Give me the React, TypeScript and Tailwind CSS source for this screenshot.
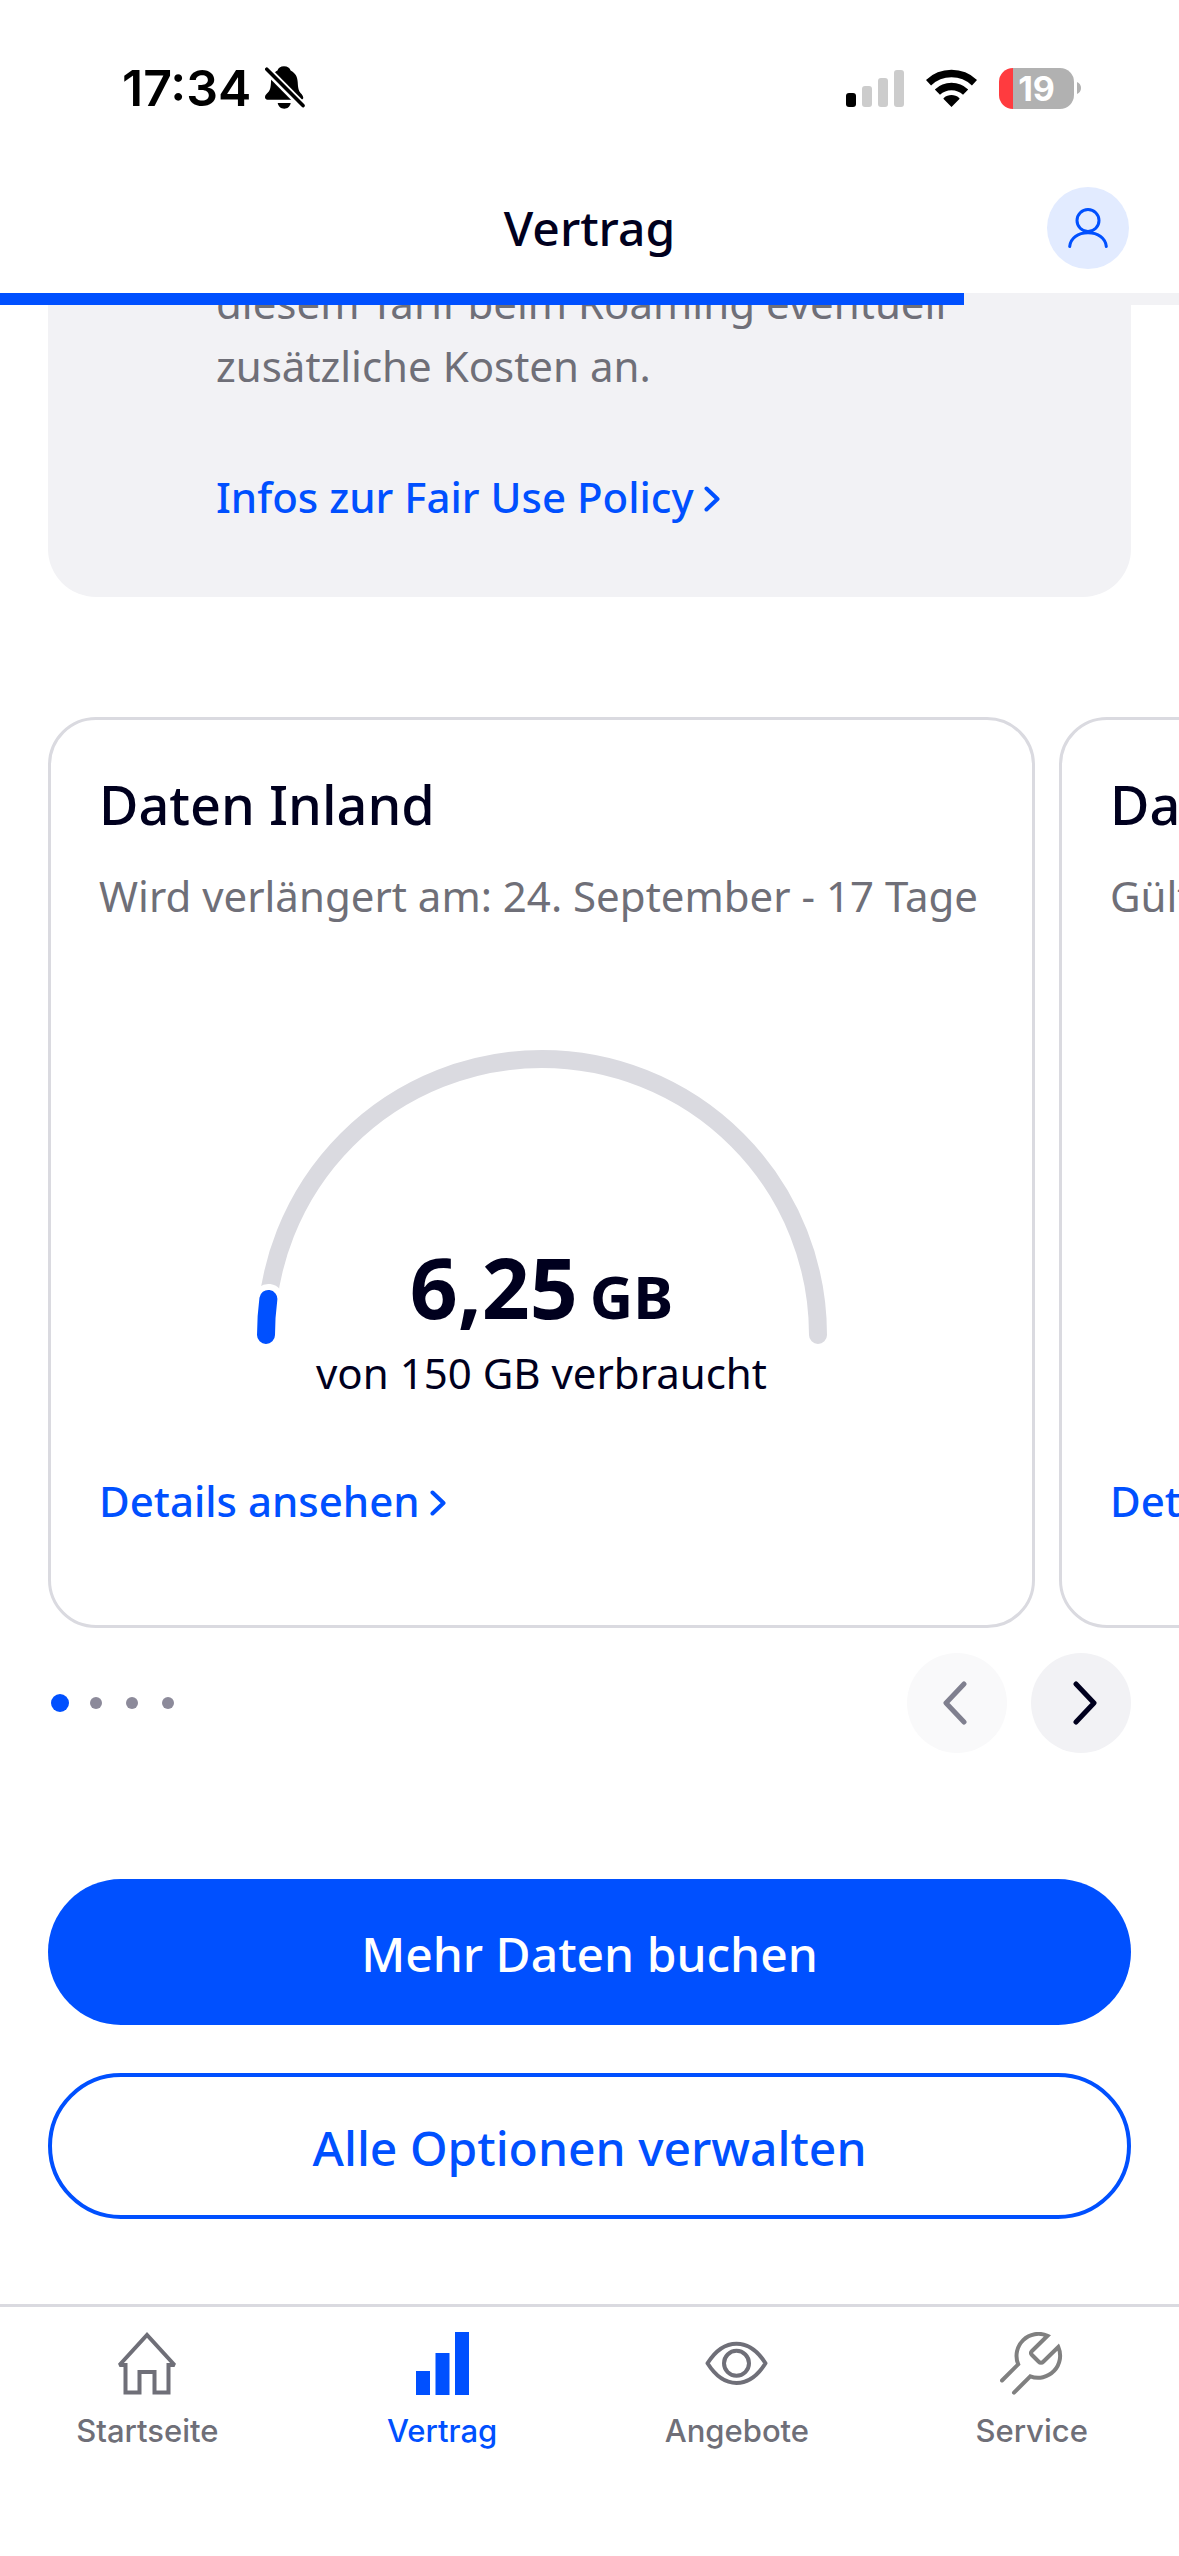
import React, { useState } from 'react';

interface Allowance {
  title: string;
  validity: string;
  used: number;
  total: number;
}

const ALLOWANCES: Allowance[] = [
  { title: 'Daten Inland', validity: 'Wird verlängert am: 24. September - 17 Tage', used: 6.25, total: 150 },
  { title: 'Daten EU', validity: 'Gültig bis: 24. September', used: 0, total: 60 },
];

const SLIDE_COUNT = 4;

const StatusBar: React.FC = () => (
  <div className="flex h-[162px] items-start justify-between pl-[122px] pr-[98px] pt-16">
    <div className="flex h-12 items-center gap-[14px]">
      <span className="font-['Inter',sans-serif] text-[50px] font-semibold leading-[48px] text-black">17:34</span>
      <svg width="40" height="44" viewBox="0 0 40 44">
        <path
          d="M19 .3C22.500 .3 25 2 25.600 4.500C30.500 7 32.500 11 32.700 16C33 22 33.500 25 36 27.500C38.500 30 39.500 33.700 36 33.700H2.500C-.5 33.700 -.8 30 1.500 28C5 25 5.700 22 6 16C6.200 11 8.500 6.500 12.500 4.500C13.200 2 15.500 .3 19 .3Z"
          fill="#000"
        />
        <path d="M12.700 37H25.700C24.800 41 22.500 42.700 19.200 42.700S13.600 41 12.700 37Z" fill="#000" />
        <path d="M-1 .8L40 42.200" stroke="#fff" strokeWidth="8" />
        <path d="M1.800 3.200L38 39.600" stroke="#000" strokeWidth="3.600" strokeLinecap="round" />
      </svg>
    </div>
    <div className="flex h-12 items-center">
      <svg width="58" height="38" viewBox="0 0 58 38">
        <rect x="0" y="24" width="10" height="14" rx="3" fill="#000" />
        <rect x="16" y="17" width="10" height="21" rx="3" fill="#ccc" />
        <rect x="32" y="9" width="10" height="29" rx="3" fill="#ccc" />
        <rect x="48" y="1" width="10" height="37" rx="3" fill="#ccc" />
      </svg>
      <svg className="ml-[22px]" width="51" height="38" viewBox="0 0 51 38">
        <g fill="none" stroke="#000" strokeWidth="7.500">
          <path d="M2.500 13.700A33.500 33.500 0 0 1 48.500 13.700" />
          <path d="M11.400 23.100A20.500 20.500 0 0 1 39.600 23.100" />
        </g>
        <path d="M25.500 38L17.600 30C17.300 29.600 17.400 29.200 17.800 28.900C22.300 25.100 28.700 25.100 33.200 28.900C33.600 29.200 33.700 29.600 33.400 30Z" fill="#000" />
      </svg>
      <span className="ml-[22px] flex h-[41px] w-[75px] items-center justify-center rounded-[14px] bg-[linear-gradient(to_right,#ff3b3f_14px,#b1b1b1_14px)] font-['Inter',sans-serif] text-[34px] font-bold leading-[41px] text-white">
        19
      </span>
      <svg className="ml-[3px]" width="4" height="12" viewBox="0 0 4 12">
        <path d="M0 0C2.500 1 4 3.300 4 6S2.500 11 0 12Z" fill="#b1b1b1" />
      </svg>
    </div>
  </div>
);

const SmallChevron: React.FC = () => (
  <svg className="mt-1" width="16" height="26" viewBox="0 0 16 26" fill="none" stroke="currentColor" strokeWidth="4" strokeLinecap="round" strokeLinejoin="round">
    <path d="M2.500 2.500L13.500 13L2.500 23.500" />
  </svg>
);

const TextLink: React.FC<{ label: string }> = ({ label }) => (
  <a href="#" className="inline-flex items-center gap-[10px] whitespace-nowrap text-[42px] font-medium leading-[63px] text-[#0050ff]">
    {label}
    <SmallChevron />
  </a>
);

// Half circle gauge, the used part starts on the left
const Gauge: React.FC<{ used: number; total: number }> = ({ used, total }) => {
  const angle = (used / total) * Math.PI;
  const x = 285 - 276 * Math.cos(angle);
  const y = 285 - 276 * Math.sin(angle);
  const usedArc = `M9 285A276 276 0 0 1 ${x} ${y}`;

  return (
    <svg className="col-start-1 row-start-1" width="570" height="294" viewBox="0 0 570 294" fill="none" strokeLinecap="round">
      <path d="M9 285A276 276 0 0 1 561 285" stroke="#dadae0" strokeWidth="18" />
      {used > 0 && (
        <>
          <path d={usedArc} stroke="#fff" strokeWidth="30" />
          <path d={usedArc} stroke="#0050ff" strokeWidth="18" />
        </>
      )}
    </svg>
  );
};

const AllowanceCard: React.FC<{ item: Allowance }> = ({ item }) => (
  <article className="w-[987px] shrink-0 rounded-[48px] border-[3px] border-[#dadae0] px-12 pb-[93px] pt-12">
    <h2 className="text-[54px] font-medium leading-[72px] text-[#00001e]">{item.title}</h2>
    <p className="mt-6 whitespace-nowrap text-[42px] leading-[63px] text-[#6f6f78]">{item.validity}</p>
    <div className="mt-[123px] grid justify-items-center">
      <Gauge used={item.used} total={item.total} />
      <div className="col-start-1 row-start-1 pt-[189px] text-center text-[#00001e]">
        <p className="text-[84px] font-bold leading-[96px]">
          {item.used.toString().replace('.', ',')}
          <span className="ml-3 text-[60px] leading-[60px]">GB</span>
        </p>
        <p className="mt-[6px] text-[42px] leading-[63px]">von {item.total} GB verbraucht</p>
      </div>
    </div>
    <div className="mt-[65px] flex">
      <TextLink label="Details ansehen" />
    </div>
  </article>
);

const HomeIcon = () => (
  <svg width="63" height="63" viewBox="0 0 63 63" fill="none" stroke="currentColor" strokeWidth="4" strokeMiterlimit="1.6">
    <path d="M9.500 33H3.500L31 3L58.500 33H52.500V60.500H38.500V40H23.500V60.500H9.500Z" />
  </svg>
);

const BarsIcon = () => (
  <svg width="63" height="63" viewBox="0 0 63 63" fill="currentColor">
    <path d="M5 39H19V63H5ZM24.500 21H38.500V63H24.500ZM44 0H58V63H44Z" />
  </svg>
);

const EyeIcon = () => (
  <svg width="63" height="63" viewBox="0 0 63 63" fill="none" stroke="currentColor" strokeWidth="4" strokeLinejoin="round">
    <path d="M2.500 31.300C10.500 18.500 20 11.700 31.500 11.700S52.500 18.500 60.500 31.300C52.500 44 43 51 31.500 51S10.500 44 2.500 31.300Z" />
    <circle cx="31.500" cy="31.300" r="12.500" />
  </svg>
);

const WrenchIcon = () => (
  <svg width="63" height="63" viewBox="0 0 63 63" fill="none" stroke="#808080" strokeWidth="4" strokeLinecap="round">
    <path d="M2 48.500L18.200 32.300A22 22 0 0 1 47.500 3.800L32 19Q30 21 32 23L38.500 29.500Q41 32 43.500 29.500L58.300 15A22 22 0 0 1 30.300 44.300L14 60.700" />
  </svg>
);

const TABS = [
  { label: 'Startseite', icon: HomeIcon },
  { label: 'Vertrag', icon: BarsIcon },
  { label: 'Angebote', icon: EyeIcon },
  { label: 'Service', icon: WrenchIcon },
];

const App: React.FC = () => {
  const [slide, setSlide] = useState<number>(0);

  return (
    <div className="flex min-h-screen flex-col overflow-hidden bg-white font-['Noto_Sans',sans-serif]">
      {/* Header */}
      <header className="relative z-10 bg-white">
        <StatusBar />
        <div className="grid h-[131px] grid-cols-[1fr_auto_1fr] items-center px-[50px]">
          <h1 className="col-start-2 text-[48px] font-medium leading-[60px] text-[#00001e]">Vertrag</h1>
          <button aria-label="Profil" className="flex size-[82px] items-center justify-center justify-self-end rounded-full bg-[#e2ebff] text-[#0050ff]">
            <svg width="40" height="40" viewBox="0 0 40 40" fill="none" stroke="currentColor" strokeWidth="3" strokeLinecap="round">
              <circle cx="20" cy="12.500" r="11" />
              <path d="M1.700 38.500C2.500 30 10 24.800 20 24.800S37.500 30 38.300 38.500" />
            </svg>
          </button>
        </div>
        <div className="h-3 bg-[#f2f2f5]">
          <div className="h-full bg-[#0050ff]" style={{ width: '81.800%' }} />
        </div>
      </header>

      <main className="-mt-[34px] flex-1 pb-[85px]">
        {/* Roaming info */}
        <section className="mx-12 rounded-b-[48px] bg-[#f2f2f5] pb-[69px] pl-[168px] pr-[120px]">
          <p className="text-[42px] leading-[63px] text-[#6f6f78]">
            diesem Tarif beim Roaming eventuell zusätzliche Kosten an.
          </p>
          <div className="mt-[68px] flex">
            <TextLink label="Infos zur Fair Use Policy" />
          </div>
        </section>

        {/* Allowances */}
        <section className="mt-[120px] flex gap-6 overflow-hidden pl-12">
          {ALLOWANCES.map((item) => (
            <AllowanceCard key={item.title} item={item} />
          ))}
        </section>

        {/* Slider controls */}
        <div className="mt-[25px] flex items-center justify-between pl-[51px] pr-12">
          <div className="flex gap-[18px]">
            {Array.from({ length: SLIDE_COUNT }, (_, i) => (
              <span key={i} className="flex size-[18px] items-center justify-center">
                <span className={i === slide ? 'size-[18px] rounded-full bg-[#0050ff]' : 'size-3 rounded-full bg-[#8c8a9a]'} />
              </span>
            ))}
          </div>
          <div className="flex gap-6">
            <button
              aria-label="Zurück"
              disabled={slide === 0}
              onClick={() => setSlide(slide - 1)}
              className="flex size-[100px] items-center justify-center rounded-full bg-[#f2f2f5] text-[#00001e] disabled:bg-[#f9f9fa] disabled:text-[#80808f]"
            >
              <svg className="mr-1" width="24" height="44" viewBox="0 0 24 44" fill="none" stroke="currentColor" strokeWidth="5" strokeLinecap="round" strokeLinejoin="round">
                <path d="M21 3L3 22L21 41" />
              </svg>
            </button>
            <button
              aria-label="Weiter"
              disabled={slide === SLIDE_COUNT - 1}
              onClick={() => setSlide(slide + 1)}
              className="flex size-[100px] items-center justify-center rounded-full bg-[#f2f2f5] text-[#00001e] disabled:bg-[#f9f9fa] disabled:text-[#80808f]"
            >
              <svg className="ml-2" width="24" height="44" viewBox="0 0 24 44" fill="none" stroke="currentColor" strokeWidth="5" strokeLinecap="round" strokeLinejoin="round">
                <path d="M3 3L21 22L3 41" />
              </svg>
            </button>
          </div>
        </div>

        {/* Actions */}
        <div className="mt-[126px] flex flex-col gap-12 px-12 text-[48px] font-medium leading-[60px]">
          <button className="h-[146px] rounded-full bg-[#0050ff] pt-1 text-white">Mehr Daten buchen</button>
          <button className="h-[146px] rounded-full border-4 border-[#0050ff] pt-1 text-[#0050ff]">Alle Optionen verwalten</button>
        </div>
      </main>

      {/* Tab bar */}
      <nav className="grid grid-cols-4 border-t-[3px] border-[#dadae0] pb-[107px] pt-[25px]">
        {TABS.map(({ label, icon: Icon }) => (
          <a
            key={label}
            href="#"
            className={`flex flex-col items-center gap-[18px] font-['Inter',sans-serif] text-[31px] font-medium leading-9 ${
              label === 'Vertrag' ? 'text-[#0050ff]' : 'text-[#6f6f78]'
            }`}
          >
            <Icon />
            {label}
          </a>
        ))}
      </nav>
    </div>
  );
};

export default App;
